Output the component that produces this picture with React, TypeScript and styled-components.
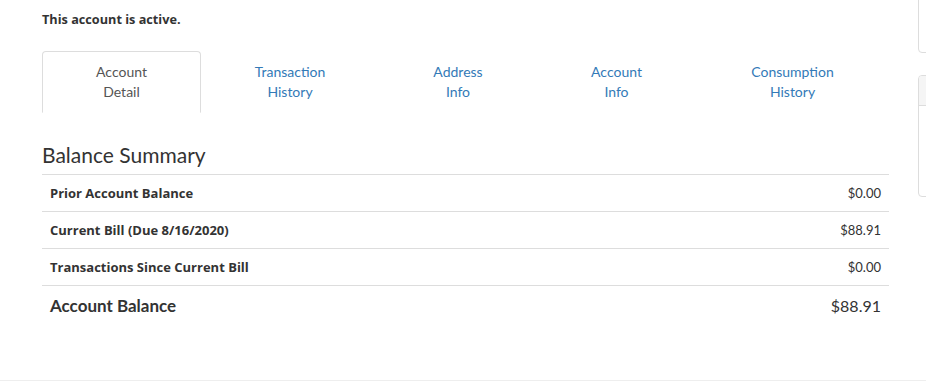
import * as React from 'react';
import styled, { createGlobalStyle } from 'styled-components';

const GlobalStyle = createGlobalStyle`
  html, body {
    margin: 0;
    padding: 0;
    background: #fff;
    overflow: hidden;
  }
  *, *::before, *::after {
    box-sizing: border-box;
  }
  body {
    font-family: Lato, 'Liberation Sans', sans-serif;
    font-size: 14px;
    line-height: 20px;
    color: #333;
  }
`;

const Page = styled.div`
  width: 926px;
  height: 385px;
  display: flex;
  flex-direction: column;
  overflow: hidden;
`;

const Body = styled.div`
  flex: 1;
  display: flex;
  align-items: flex-start;
  padding-left: 42px;
  gap: 29px;
`;

const Main = styled.main`
  width: 847px;
  flex-shrink: 0;
`;

const Status = styled.p`
  margin: 9px 0 22px;
  font-family: 'Open Sans', sans-serif;
  font-weight: 700;
  font-size: 12.7px;
`;

const Tabs = styled.ul`
  list-style: none;
  margin: 0;
  padding: 0;
  display: flex;
  border-bottom: 1px solid #ddd;
`;

const Tab = styled.li<{ $width: number; $active?: boolean }>`
  flex: 0 0 ${(p) => p.$width}px;
  margin-bottom: -1px;
  text-align: center;
  padding: 10px 15px;
  border: 1px solid ${(p) => (p.$active ? '#ddd' : 'transparent')};
  border-bottom-color: ${(p) => (p.$active ? '#fff' : 'transparent')};
  border-radius: 4px 4px 0 0;
  background: #fff;
  color: ${(p) => (p.$active ? '#555' : '#337ab7')};
  cursor: pointer;
`;

const Heading = styled.h3`
  margin: 29px 0 6px;
  font-size: 21px;
  font-weight: 400;
  line-height: 26px;
  color: #333;
`;

const Table = styled.table`
  width: 100%;
  border-collapse: collapse;
`;

const Row = styled.tr<{ $total?: boolean }>`
  td {
    border-top: 1px solid #ddd;
    padding: ${(p) => (p.$total ? '10px 8px' : '8px')};
    line-height: 20px;
    font-size: ${(p) => (p.$total ? '17px' : '13px')};
  }
`;

const Label = styled.td<{ $total?: boolean }>`
  font-family: ${(p) => (p.$total ? 'Lato' : "'Open Sans'")}, sans-serif;
  font-weight: 700;
`;

const Amount = styled.td<{ $total?: boolean }>`
  text-align: right;
  font-size: ${(p) => (p.$total ? '16px' : '13px')} !important;
`;

const Side = styled.aside`
  flex: 1;
  margin-top: -20px;
  display: flex;
  flex-direction: column;
  gap: 22px;
`;

const Card = styled.div<{ $height: number }>`
  height: ${(p) => p.$height}px;
  border: 1px solid #ddd;
  border-radius: 4px;
  width: 200px;
  overflow: hidden;
`;

const CardHeader = styled.div`
  height: 30px;
  background: #f5f5f5;
  border-bottom: 1px solid #ddd;
`;

const Footer = styled.footer`
  height: 5px;
  border-top: 1px solid #eee;
`;

const tabs = [
  { label: ['Account', 'Detail'], width: 159, active: true },
  { label: ['Transaction', 'History'], width: 178 },
  { label: ['Address', 'Info'], width: 158 },
  { label: ['Account', 'Info'], width: 159 },
  { label: ['Consumption', 'History'], width: 193 },
];

const rows = [
  { label: 'Prior Account Balance', amount: '$0.00' },
  { label: 'Current Bill (Due 8/16/2020)', amount: '$88.91' },
  { label: 'Transactions Since Current Bill', amount: '$0.00' },
];

export default function App() {
  return (
    <Page>
      <GlobalStyle />
      <Body>
        <Main>
          <Status>This account is active.</Status>
          <Tabs>
            {tabs.map((t) => (
              <Tab key={t.label.join(' ')} $width={t.width} $active={t.active}>
                {t.label[0]}
                <br />
                {t.label[1]}
              </Tab>
            ))}
          </Tabs>
          <Heading>Balance Summary</Heading>
          <Table>
            <tbody>
              {rows.map((r) => (
                <Row key={r.label}>
                  <Label>{r.label}</Label>
                  <Amount>{r.amount}</Amount>
                </Row>
              ))}
              <Row $total={true}>
                <Label $total={true}>Account Balance</Label>
                <Amount $total={true}>$88.91</Amount>
              </Row>
            </tbody>
          </Table>
        </Main>
        <Side>
          <Card $height={73} />
          <Card $height={122}>
            <CardHeader />
          </Card>
        </Side>
      </Body>
      <Footer />
    </Page>
  );
}
